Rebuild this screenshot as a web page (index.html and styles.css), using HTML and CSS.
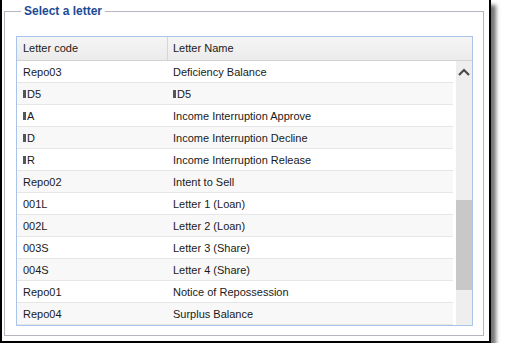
FILE: index.html
```html
<!DOCTYPE html>
<html lang="en">

<head>
  <meta charset="UTF-8">
  <meta name="viewport" content="width=device-width, initial-scale=1.0">
  <title>Select a letter</title>
  <link rel="stylesheet" href="styles.css">
</head>

<body>
  <div class="frame">
    <fieldset class="letter-box">
      <legend>Select a letter</legend>
      <div class="list">
        <div class="list-head">
          <div class="col-code">Letter code</div>
          <div class="col-name">Letter Name</div>
        </div>
        <div class="list-body">
          <div class="rows">
            <div class="row"><div class="cell-code">Repo03</div><div class="cell-name">Deficiency Balance</div></div>
            <div class="row"><div class="cell-code"><span class="box"></span>D5</div><div class="cell-name"><span class="box"></span>D5</div></div>
            <div class="row"><div class="cell-code"><span class="box"></span>A</div><div class="cell-name">Income Interruption Approve</div></div>
            <div class="row"><div class="cell-code"><span class="box"></span>D</div><div class="cell-name">Income Interruption Decline</div></div>
            <div class="row"><div class="cell-code"><span class="box"></span>R</div><div class="cell-name">Income Interruption Release</div></div>
            <div class="row"><div class="cell-code">Repo02</div><div class="cell-name">Intent to Sell</div></div>
            <div class="row"><div class="cell-code">001L</div><div class="cell-name">Letter 1 (Loan)</div></div>
            <div class="row"><div class="cell-code">002L</div><div class="cell-name">Letter 2 (Loan)</div></div>
            <div class="row"><div class="cell-code">003S</div><div class="cell-name">Letter 3 (Share)</div></div>
            <div class="row"><div class="cell-code">004S</div><div class="cell-name">Letter 4 (Share)</div></div>
            <div class="row"><div class="cell-code">Repo01</div><div class="cell-name">Notice of Repossession</div></div>
            <div class="row"><div class="cell-code">Repo04</div><div class="cell-name">Surplus Balance</div></div>
          </div>
          <!-- scrollbar -->
          <div class="scrollbar">
            <div class="sb-btn">
              <svg width="12" height="8" viewBox="0 0 12 8"><path d="M1 7 L6 2 L11 7" fill="none" stroke="#4a4a4a" stroke-width="2.2"/></svg>
            </div>
            <div class="sb-track">
              <div class="sb-thumb"></div>
            </div>
            <div class="sb-btn">
              <svg width="12" height="8" viewBox="0 0 12 8"><path d="M1 1 L6 6 L11 1" fill="none" stroke="#4a4a4a" stroke-width="2.2"/></svg>
            </div>
          </div>
        </div>
      </div>
    </fieldset>
  </div>
</body>

</html>
```

FILE: styles.css
```css
body {
  margin: 0;
  background-color: white;
  font-family: "Liberation Sans", Arial, sans-serif;
  font-size: 11px;
  color: #1a1a1a;
}

.frame {
  width: 491px;
  height: 343px;
  box-sizing: border-box;
  border: 2px solid #000;
  border-top: none;
  padding: 4px 2px 0;
  overflow: hidden;
  background-color: white;
  box-shadow: 5px 5px 4px rgba(0, 0, 0, 0.55);
}

.letter-box {
  width: 480px;
  box-sizing: border-box;
  margin: 0;
  padding: 18px 10px 9px 11px;
  border: 1px solid #b6b6be;
}

.letter-box legend {
  margin-left: 5px;
  padding: 0 3px;
  font-size: 12px;
  font-weight: bold;
  line-height: 14px;
  color: #1d4a94;
}

.list {
  width: 457px;
  box-sizing: border-box;
  border: 1px solid #a8c4ea;
}

.list-head {
  display: flex;
  height: 24px;
  box-sizing: border-box;
  line-height: 23px;
  background: linear-gradient(#f5f5f5, #ebebeb);
  border-bottom: 1px solid #d2d2d2;
}

.col-code {
  width: 151px;
  box-sizing: border-box;
  padding-left: 6px;
  border-right: 1px solid #d6d6d6;
}

.col-name {
  padding-left: 5px;
}

.list-body {
  display: flex;
}

.rows {
  width: 436px;
  margin-right: 3px;
}

.row {
  display: flex;
  height: 22px;
  box-sizing: border-box;
  line-height: 22px;
  border-bottom: 1px solid #e6e6e6;
}

.row:nth-child(even) {
  background-color: #f8f8f8;
}

.cell-code {
  width: 150px;
  padding-left: 6px;
  box-sizing: border-box;
}

.cell-name {
  padding-left: 6px;
}

.box {
  display: inline-block;
  width: 3px;
  height: 8px;
  margin-right: 1px;
  background-color: #555;
}

.scrollbar {
  width: 16px;
  height: 264px;
  background-color: #eeeeee;
}

.sb-btn {
  height: 22px;
  display: flex;
  align-items: center;
  justify-content: center;
}

.sb-track {
  height: 209px;
}

.sb-thumb {
  margin-top: 117px;
  height: 90px;
  background-color: #c8c8c8;
}
```
